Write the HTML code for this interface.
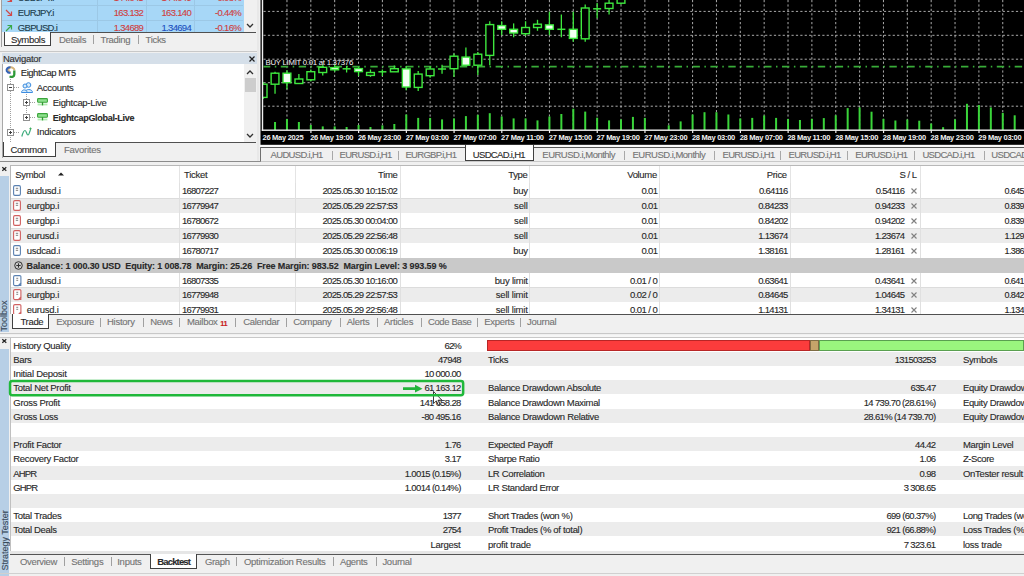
<!DOCTYPE html><html><head><meta charset="utf-8"><style>
html,body{margin:0;padding:0}
body{width:1024px;height:576px;overflow:hidden;position:relative;background:#f0f0f0;font-family:"Liberation Sans",sans-serif;font-size:9px;color:#1e1e1e}
.t{position:absolute;white-space:nowrap;line-height:12px;height:12px;-webkit-text-stroke:0.12px currentColor}
.r{position:absolute}
svg{position:absolute;overflow:visible}
</style></head><body>
<div class="r" style="left:0px;top:0px;width:257px;height:162px;background:#f0f0f0;"></div>
<div class="r" style="left:1.5px;top:0px;width:242px;height:32px;background:#a7d7f7;"></div>
<div class="r" style="left:1px;top:0px;width:1px;height:47px;background:#a0a0a0;"></div>
<div class="r" style="left:2px;top:5px;width:241px;height:1px;background:#9cc8e6;"></div>
<div class="r" style="left:2px;top:20px;width:241px;height:1px;background:#9cc8e6;"></div>
<div class="r" style="left:97px;top:0px;width:1px;height:32px;background:#9cc8e6;"></div>
<div class="r" style="left:145.5px;top:0px;width:1px;height:32px;background:#9cc8e6;"></div>
<div class="r" style="left:193.5px;top:0px;width:1px;height:32px;background:#9cc8e6;"></div>
<div class="r" style="left:243.5px;top:0px;width:13px;height:32px;background:#f0f0f0;"></div>
<svg style="left:246px;top:23px" width="8" height="6"><polyline points="1,1 4,4 7,1" fill="none" stroke="#303030" stroke-width="1.3"/></svg>
<div class="t" style="left:17.8px;top:-8.00px;font-size:9.5px;color:#1c3c4c;font-weight:400;letter-spacing:-0.652px;">USDJPY.i</div>
<div class="t" style="right:880.80px;top:-8.00px;font-size:9.5px;color:#d04040;font-weight:400;letter-spacing:-0.696px;">144.045</div>
<div class="t" style="right:833.00px;top:-8.00px;font-size:9.5px;color:#d04040;font-weight:400;letter-spacing:-0.696px;">144.049</div>
<div class="t" style="right:783.01px;top:-8.00px;font-size:9.5px;color:#d04040;font-weight:400;letter-spacing:-0.693px;">-0.08%</div>
<svg style="left:5px;top:-5px" width="8" height="8"><path d="M1,1 L6.5,6.5 M6.5,2.5 L6.5,6.5 L2.5,6.5" fill="none" stroke="#d04848" stroke-width="1.2"/></svg>
<div class="t" style="left:17.8px;top:7.30px;font-size:9.5px;color:#1c3c4c;font-weight:400;letter-spacing:-0.652px;">EURJPY.i</div>
<div class="t" style="right:880.80px;top:7.30px;font-size:9.5px;color:#d04040;font-weight:400;letter-spacing:-0.696px;">163.132</div>
<div class="t" style="right:833.00px;top:7.30px;font-size:9.5px;color:#d04040;font-weight:400;letter-spacing:-0.696px;">163.140</div>
<div class="t" style="right:783.01px;top:7.30px;font-size:9.5px;color:#d04040;font-weight:400;letter-spacing:-0.693px;">-0.44%</div>
<svg style="left:5px;top:9px" width="8" height="8"><path d="M1,1 L6.5,6.5 M6.5,2.5 L6.5,6.5 L2.5,6.5" fill="none" stroke="#d04848" stroke-width="1.2"/></svg>
<div class="t" style="left:17.8px;top:22.10px;font-size:9.5px;color:#1c3c4c;font-weight:400;letter-spacing:-0.693px;">GBPUSD.i</div>
<div class="t" style="right:880.80px;top:22.10px;font-size:9.5px;color:#d04040;font-weight:400;letter-spacing:-0.696px;">1.34689</div>
<div class="t" style="right:833.00px;top:22.10px;font-size:9.5px;color:#2050c0;font-weight:400;letter-spacing:-0.696px;">1.34694</div>
<div class="t" style="right:783.01px;top:22.10px;font-size:9.5px;color:#d04040;font-weight:400;letter-spacing:-0.693px;">-0.16%</div>
<svg style="left:5px;top:24px" width="8" height="8"><path d="M1,7 L6.5,1.5 M2.5,1.5 L6.5,1.5 L6.5,5.5" fill="none" stroke="#38a848" stroke-width="1.2"/></svg>
<div class="r" style="left:51px;top:31.5px;width:205px;height:1.3px;background:#505050;"></div>
<div class="r" style="left:3.5px;top:32px;width:47px;height:14px;background:#fff;border:1px solid #404040;border-top:none;box-sizing:border-box"></div>
<div class="t" style="left:10.9px;top:33.80px;font-size:9.5px;color:#282828;font-weight:400;letter-spacing:-0.321px;">Symbols</div>
<div class="t" style="left:59px;top:33.80px;font-size:9.5px;color:#747474;font-weight:400;letter-spacing:-0.276px;">Details</div>
<div class="r" style="left:93px;top:35px;width:1px;height:9px;background:#a0a0a0;"></div>
<div class="t" style="left:100.5px;top:33.80px;font-size:9.5px;color:#747474;font-weight:400;letter-spacing:-0.286px;">Trading</div>
<div class="r" style="left:137.5px;top:35px;width:1px;height:9px;background:#a0a0a0;"></div>
<div class="t" style="left:145.5px;top:33.80px;font-size:9.5px;color:#747474;font-weight:400;letter-spacing:-0.304px;">Ticks</div>
<div class="r" style="left:0px;top:51px;width:257px;height:1px;background:#c8c8c8;"></div>
<div class="r" style="left:1.5px;top:53px;width:255px;height:11px;background:#d5dfe9;"></div>
<div class="t" style="left:3px;top:52.80px;font-size:9.5px;color:#303030;font-weight:400;letter-spacing:-0.277px;">Navigator</div>
<svg style="left:249px;top:55.5px" width="6" height="6"><path d="M0.5,0.5 L5.5,5.5 M5.5,0.5 L0.5,5.5" stroke="#202020" stroke-width="1.2"/></svg>
<div class="r" style="left:2px;top:64px;width:242px;height:78px;background:#ffffff;"></div>
<div class="r" style="left:1.5px;top:64px;width:1px;height:94px;background:#a8a8a8;"></div>
<div class="r" style="left:244px;top:64px;width:12.5px;height:78px;background:#f0f0f0;"></div>
<div class="r" style="left:244.5px;top:77.7px;width:11px;height:14.6px;background:#cdcdcd;"></div>
<svg style="left:246px;top:69px" width="8" height="6"><polyline points="1,5 4,2 7,5" fill="none" stroke="#303030" stroke-width="1.3"/></svg>
<svg style="left:246px;top:132.5px" width="8" height="6"><polyline points="1,1 4,4 7,1" fill="none" stroke="#303030" stroke-width="1.3"/></svg>
<svg style="left:0px;top:64px" width="60" height="80"><line x1="10.5" y1="13" x2="10.5" y2="78" stroke="#a0a0a0" stroke-width="1" stroke-dasharray="1 1"/><line x1="26.5" y1="28" x2="26.5" y2="53" stroke="#a0a0a0" stroke-width="1" stroke-dasharray="1 1"/><line x1="14" y1="23.5" x2="20" y2="23.5" stroke="#a0a0a0" stroke-width="1" stroke-dasharray="1 1"/><line x1="30" y1="38.5" x2="36" y2="38.5" stroke="#a0a0a0" stroke-width="1" stroke-dasharray="1 1"/><line x1="30" y1="53.5" x2="36" y2="53.5" stroke="#a0a0a0" stroke-width="1" stroke-dasharray="1 1"/><line x1="14" y1="68.5" x2="20" y2="68.5" stroke="#a0a0a0" stroke-width="1" stroke-dasharray="1 1"/></svg>
<svg style="left:4.5px;top:66px" width="12" height="12"><path d="M9.5,4.5 C9.5,2 6.5,0.8 5,1.5 C2.5,2.5 3,5 5.5,6.5" fill="none" stroke="#d6b47a" stroke-width="2"/><path d="M5.5,1.2 C3,1 1,3 1.8,5 C2.5,6.5 4,7 5.5,7" fill="none" stroke="#3462b4" stroke-width="2.1"/><path d="M9.3,4.5 L9.3,8.5 C9.3,10.5 7,11.5 4.5,10.5" fill="none" stroke="#2e9a38" stroke-width="2.3"/></svg>
<div class="t" style="left:20.8px;top:66.70px;font-size:9.5px;color:#282828;font-weight:400;letter-spacing:-0.48px;">EightCap MT5</div>
<svg style="left:7px;top:84px" width="7" height="7"><rect x="0.5" y="0.5" width="6" height="6" fill="#fff" stroke="#909090" stroke-width="1"/><path d="M2,3.5 H5" stroke="#404040" stroke-width="1"/><path d="M3.5,2 V5" stroke="#404040" stroke-width="1"/></svg>
<svg style="left:7px;top:84px" width="7" height="7"><rect x="0.5" y="0.5" width="6" height="6" fill="#fff" stroke="#909090" stroke-width="1"/><path d="M2,3.5 H5" stroke="#404040" stroke-width="1"/></svg>
<svg style="left:20.5px;top:82px" width="12" height="11"><circle cx="7.5" cy="3" r="2.3" fill="#d8ecfa" stroke="#3c8ce0" stroke-width="1"/><path d="M4,10.5 C4,6.5 11.5,6.5 11.5,10.5 Z" fill="#d8ecfa" stroke="#3c8ce0" stroke-width="1"/><circle cx="4" cy="4" r="2" fill="#d8ecfa" stroke="#3c8ce0" stroke-width="1"/><path d="M0.5,10.5 C0.5,7 6,7 6,10.5 Z" fill="#d8ecfa" stroke="#3c8ce0" stroke-width="1"/></svg>
<div class="t" style="left:36.8px;top:81.70px;font-size:9.5px;color:#282828;font-weight:400;letter-spacing:-0.297px;">Accounts</div>
<svg style="left:23.1px;top:99.2px" width="7" height="7"><rect x="0.5" y="0.5" width="6" height="6" fill="#fff" stroke="#909090" stroke-width="1"/><path d="M2,3.5 H5" stroke="#404040" stroke-width="1"/><path d="M3.5,2 V5" stroke="#404040" stroke-width="1"/></svg>
<svg style="left:36.8px;top:97.8px" width="11" height="8"><rect x="0.6" y="0.6" width="9.8" height="3.6" rx="0.8" fill="#8ee08e" stroke="#3aa53a" stroke-width="1.1"/><rect x="0.6" y="5.6" width="9.8" height="1.8" fill="#b4ecb4"/><path d="M5.5,4.2 V7.4" stroke="#2f9a2f" stroke-width="1.3"/></svg>
<div class="t" style="left:52.8px;top:96.60px;font-size:9.5px;color:#282828;font-weight:400;letter-spacing:-0.304px;">Eightcap-Live</div>
<svg style="left:23.1px;top:114px" width="7" height="7"><rect x="0.5" y="0.5" width="6" height="6" fill="#fff" stroke="#909090" stroke-width="1"/><path d="M2,3.5 H5" stroke="#404040" stroke-width="1"/><path d="M3.5,2 V5" stroke="#404040" stroke-width="1"/></svg>
<svg style="left:36.8px;top:112.6px" width="11" height="8"><rect x="0.6" y="0.6" width="9.8" height="3.6" rx="0.8" fill="#8ee08e" stroke="#3aa53a" stroke-width="1.1"/><rect x="0.6" y="5.6" width="9.8" height="1.8" fill="#b4ecb4"/><path d="M5.5,4.2 V7.4" stroke="#2f9a2f" stroke-width="1.3"/></svg>
<div class="t" style="left:52.8px;top:111.60px;font-size:9px;color:#282828;font-weight:700;letter-spacing:-0.3px;">EightcapGlobal-Live</div>
<svg style="left:7px;top:129.4px" width="7" height="7"><rect x="0.5" y="0.5" width="6" height="6" fill="#fff" stroke="#909090" stroke-width="1"/><path d="M2,3.5 H5" stroke="#404040" stroke-width="1"/><path d="M3.5,2 V5" stroke="#404040" stroke-width="1"/></svg>
<svg style="left:21px;top:127px" width="11" height="10"><path d="M0.8,9.5 C1.5,7 2.5,3.5 4,3.5 C5.5,3.5 5.5,8 7,8 C8.3,8 8.5,4 9.5,3" fill="none" stroke="#3aaa7a" stroke-width="1.2"/><path d="M9.5,0.5 V3 M8.3,1.7 H10.7" stroke="#3aaa5a" stroke-width="0.9"/></svg>
<div class="t" style="left:36.8px;top:126.40px;font-size:9.5px;color:#282828;font-weight:400;letter-spacing:-0.218px;">Indicators</div>
<div class="r" style="left:56px;top:141.5px;width:200px;height:1.3px;background:#505050;"></div>
<div class="r" style="left:244px;top:141.5px;width:12px;height:1.3px;background:#505050;"></div>
<div class="r" style="left:3.3px;top:142px;width:52.5px;height:14.5px;background:#fff;border:1px solid #404040;border-top:none;box-sizing:border-box"></div>
<div class="t" style="left:10.5px;top:143.60px;font-size:9.5px;color:#282828;font-weight:400;letter-spacing:-0.398px;">Common</div>
<div class="t" style="left:64px;top:143.60px;font-size:9.5px;color:#747474;font-weight:400;letter-spacing:-0.259px;">Favorites</div>
<div class="r" style="left:257px;top:0px;width:2px;height:162px;background:#e8e8e8;"></div>
<svg style="left:259.5px;top:0px" width="765" height="145" viewBox="259.5 0 765 145">
<rect x="260" y="0" width="764.5" height="144.8" fill="#000"/><defs><clipPath id="cp"><rect x="262.6" y="0" width="762" height="130"/></clipPath></defs><g clip-path="url(#cp)">
<g stroke="#ababab" stroke-width="1" stroke-dasharray="2.2 2.2"><line x1="286.46" y1="0" x2="286.46" y2="130" /><line x1="310.32" y1="0" x2="310.32" y2="130" /><line x1="334.18" y1="0" x2="334.18" y2="130" /><line x1="358.04" y1="0" x2="358.04" y2="130" /><line x1="381.90" y1="0" x2="381.90" y2="130" /><line x1="405.76" y1="0" x2="405.76" y2="130" /><line x1="429.62" y1="0" x2="429.62" y2="130" /><line x1="453.48" y1="0" x2="453.48" y2="130" /><line x1="477.34" y1="0" x2="477.34" y2="130" /><line x1="501.20" y1="0" x2="501.20" y2="130" /><line x1="525.06" y1="0" x2="525.06" y2="130" /><line x1="548.92" y1="0" x2="548.92" y2="130" /><line x1="572.78" y1="0" x2="572.78" y2="130" /><line x1="596.64" y1="0" x2="596.64" y2="130" /><line x1="620.50" y1="0" x2="620.50" y2="130" /><line x1="644.36" y1="0" x2="644.36" y2="130" /><line x1="668.22" y1="0" x2="668.22" y2="130" /><line x1="692.08" y1="0" x2="692.08" y2="130" /><line x1="715.94" y1="0" x2="715.94" y2="130" /><line x1="739.80" y1="0" x2="739.80" y2="130" /><line x1="763.66" y1="0" x2="763.66" y2="130" /><line x1="787.52" y1="0" x2="787.52" y2="130" /><line x1="811.38" y1="0" x2="811.38" y2="130" /><line x1="835.24" y1="0" x2="835.24" y2="130" /><line x1="859.10" y1="0" x2="859.10" y2="130" /><line x1="882.96" y1="0" x2="882.96" y2="130" /><line x1="906.82" y1="0" x2="906.82" y2="130" /><line x1="930.68" y1="0" x2="930.68" y2="130" /><line x1="954.54" y1="0" x2="954.54" y2="130" /><line x1="978.40" y1="0" x2="978.40" y2="130" /><line x1="1002.26" y1="0" x2="1002.26" y2="130" /><line x1="1026.12" y1="0" x2="1026.12" y2="130" /><line x1="263" y1="11.4" x2="1024" y2="11.4" /><line x1="263" y1="35.3" x2="1024" y2="35.3" /><line x1="263" y1="59.2" x2="1024" y2="59.2" /><line x1="263" y1="82.7" x2="1024" y2="82.7" /><line x1="263" y1="106.2" x2="1024" y2="106.2" /></g>
<line x1="263" y1="66.7" x2="1024" y2="66.7" stroke="#38ac38" stroke-width="1.7" stroke-dasharray="7.4 4.5 1.5 4.5" stroke-dashoffset="0.6"/>
<line x1="262.60" y1="82" x2="262.60" y2="99" stroke="#3ee83e" stroke-width="1.3"/><rect x="258.70" y="84.2" width="7.8" height="13.20" fill="#000" stroke="#3ee83e" stroke-width="1.4"/><line x1="274.53" y1="71.7" x2="274.53" y2="93.7" stroke="#3ee83e" stroke-width="1.3"/><rect x="270.63" y="73.2" width="7.8" height="11.00" fill="#000" stroke="#3ee83e" stroke-width="1.4"/><line x1="286.46" y1="70.3" x2="286.46" y2="89.3" stroke="#3ee83e" stroke-width="1.3"/><rect x="282.56" y="73.2" width="7.8" height="9.50" fill="#f4fff4" stroke="#3ee83e" stroke-width="1.4"/><line x1="298.39" y1="74" x2="298.39" y2="83.5" stroke="#3ee83e" stroke-width="1.3"/><rect x="294.49" y="79" width="7.8" height="4.50" fill="#000" stroke="#3ee83e" stroke-width="1.4"/><line x1="310.32" y1="69.5" x2="310.32" y2="81.3" stroke="#3ee83e" stroke-width="1.3"/><rect x="306.42" y="71.7" width="7.8" height="8.10" fill="#000" stroke="#3ee83e" stroke-width="1.4"/><line x1="322.25" y1="65.2" x2="322.25" y2="75.4" stroke="#3ee83e" stroke-width="1.3"/><rect x="318.35" y="67.3" width="7.8" height="5.20" fill="#000" stroke="#3ee83e" stroke-width="1.4"/><line x1="334.18" y1="64.4" x2="334.18" y2="71.7" stroke="#3ee83e" stroke-width="1.3"/><rect x="330.28" y="67.6" width="7.8" height="2.20" fill="#f4fff4" stroke="#3ee83e" stroke-width="1.4"/><line x1="346.11" y1="65.9" x2="346.11" y2="72.5" stroke="#3ee83e" stroke-width="1.3"/><line x1="342.11" y1="68.8" x2="350.11" y2="68.8" stroke="#3ee83e" stroke-width="1.5"/><line x1="358.04" y1="66.6" x2="358.04" y2="76.1" stroke="#3ee83e" stroke-width="1.3"/><rect x="354.14" y="68.6" width="7.8" height="3.00" fill="#f4fff4" stroke="#3ee83e" stroke-width="1.4"/><line x1="369.97" y1="69.5" x2="369.97" y2="76.9" stroke="#3ee83e" stroke-width="1.3"/><rect x="366.07" y="72.5" width="7.8" height="2.90" fill="#000" stroke="#3ee83e" stroke-width="1.4"/><line x1="381.90" y1="69.5" x2="381.90" y2="76" stroke="#3ee83e" stroke-width="1.3"/><line x1="377.90" y1="71.8" x2="385.90" y2="71.8" stroke="#3ee83e" stroke-width="1.5"/><line x1="393.83" y1="65.5" x2="393.83" y2="71.8" stroke="#3ee83e" stroke-width="1.3"/><rect x="389.93" y="68.7" width="7.8" height="3.10" fill="#000" stroke="#3ee83e" stroke-width="1.4"/><line x1="405.76" y1="66" x2="405.76" y2="90.2" stroke="#3ee83e" stroke-width="1.3"/><rect x="401.86" y="68.9" width="7.8" height="18.10" fill="#f4fff4" stroke="#3ee83e" stroke-width="1.4"/><line x1="417.69" y1="71" x2="417.69" y2="91" stroke="#3ee83e" stroke-width="1.3"/><rect x="413.79" y="74.1" width="7.8" height="13.30" fill="#000" stroke="#3ee83e" stroke-width="1.4"/><line x1="429.62" y1="66" x2="429.62" y2="77.7" stroke="#3ee83e" stroke-width="1.3"/><rect x="425.72" y="69" width="7.8" height="6.70" fill="#000" stroke="#3ee83e" stroke-width="1.4"/><line x1="441.55" y1="64.8" x2="441.55" y2="73.8" stroke="#3ee83e" stroke-width="1.3"/><line x1="437.55" y1="69" x2="445.55" y2="69" stroke="#3ee83e" stroke-width="1.5"/><line x1="453.48" y1="53.5" x2="453.48" y2="76.9" stroke="#3ee83e" stroke-width="1.3"/><rect x="449.58" y="56.2" width="7.8" height="12.50" fill="#000" stroke="#3ee83e" stroke-width="1.4"/><line x1="465.41" y1="47.6" x2="465.41" y2="65.2" stroke="#3ee83e" stroke-width="1.3"/><rect x="461.51" y="57.1" width="7.8" height="8.10" fill="#f4fff4" stroke="#3ee83e" stroke-width="1.4"/><line x1="477.34" y1="52" x2="477.34" y2="75" stroke="#3ee83e" stroke-width="1.3"/><rect x="473.44" y="54.2" width="7.8" height="11.00" fill="#000" stroke="#3ee83e" stroke-width="1.4"/><line x1="489.27" y1="21.2" x2="489.27" y2="65.2" stroke="#3ee83e" stroke-width="1.3"/><rect x="485.37" y="24.6" width="7.8" height="30.80" fill="#000" stroke="#3ee83e" stroke-width="1.4"/><line x1="501.20" y1="21.2" x2="501.20" y2="35.2" stroke="#3ee83e" stroke-width="1.3"/><rect x="497.30" y="25.6" width="7.8" height="3.70" fill="#f4fff4" stroke="#3ee83e" stroke-width="1.4"/><line x1="513.13" y1="23.4" x2="513.13" y2="37.3" stroke="#3ee83e" stroke-width="1.3"/><rect x="509.23" y="29.3" width="7.8" height="3.70" fill="#f4fff4" stroke="#3ee83e" stroke-width="1.4"/><line x1="525.06" y1="21.2" x2="525.06" y2="35.9" stroke="#3ee83e" stroke-width="1.3"/><rect x="521.16" y="27.5" width="7.8" height="6.20" fill="#000" stroke="#3ee83e" stroke-width="1.4"/><line x1="536.99" y1="19.8" x2="536.99" y2="30.8" stroke="#3ee83e" stroke-width="1.3"/><rect x="533.09" y="24.2" width="7.8" height="3.30" fill="#000" stroke="#3ee83e" stroke-width="1.4"/><line x1="548.92" y1="11.7" x2="548.92" y2="35.2" stroke="#3ee83e" stroke-width="1.3"/><rect x="545.02" y="24.9" width="7.8" height="4.40" fill="#f4fff4" stroke="#3ee83e" stroke-width="1.4"/><line x1="560.85" y1="14.6" x2="560.85" y2="37.3" stroke="#3ee83e" stroke-width="1.3"/><line x1="556.85" y1="29.3" x2="564.85" y2="29.3" stroke="#3ee83e" stroke-width="1.5"/><line x1="572.78" y1="11.7" x2="572.78" y2="41.7" stroke="#3ee83e" stroke-width="1.3"/><rect x="568.88" y="29.3" width="7.8" height="9.10" fill="#f4fff4" stroke="#3ee83e" stroke-width="1.4"/><line x1="584.71" y1="4.4" x2="584.71" y2="41.7" stroke="#3ee83e" stroke-width="1.3"/><rect x="580.81" y="8" width="7.8" height="30.80" fill="#000" stroke="#3ee83e" stroke-width="1.4"/><line x1="596.64" y1="2.9" x2="596.64" y2="18.3" stroke="#3ee83e" stroke-width="1.3"/><line x1="592.64" y1="8.8" x2="600.64" y2="8.8" stroke="#3ee83e" stroke-width="1.5"/><line x1="608.57" y1="0" x2="608.57" y2="14.6" stroke="#3ee83e" stroke-width="1.3"/><rect x="604.67" y="3.2" width="7.8" height="5.30" fill="#000" stroke="#3ee83e" stroke-width="1.4"/><line x1="620.50" y1="-5" x2="620.50" y2="4.4" stroke="#3ee83e" stroke-width="1.3"/><rect x="616.60" y="-3" width="7.8" height="6.20" fill="#000" stroke="#3ee83e" stroke-width="1.4"/>
<rect x="273.53" y="122" width="2" height="8.00" fill="#3ad43a"/><rect x="285.46" y="119" width="2" height="11.00" fill="#3ad43a"/><rect x="297.39" y="122" width="2" height="8.00" fill="#3ad43a"/><rect x="309.32" y="125" width="2" height="5.00" fill="#3ad43a"/><rect x="321.25" y="126.4" width="2" height="3.60" fill="#3ad43a"/><rect x="333.18" y="126.4" width="2" height="3.60" fill="#3ad43a"/><rect x="345.11" y="127" width="2" height="3.00" fill="#3ad43a"/><rect x="357.04" y="125" width="2" height="5.00" fill="#3ad43a"/><rect x="368.97" y="127" width="2" height="3.00" fill="#3ad43a"/><rect x="380.90" y="125.4" width="2" height="4.60" fill="#3ad43a"/><rect x="392.83" y="124" width="2" height="6.00" fill="#3ad43a"/><rect x="404.76" y="114.5" width="2" height="15.50" fill="#3ad43a"/><rect x="416.69" y="117.9" width="2" height="12.10" fill="#3ad43a"/><rect x="428.62" y="117.9" width="2" height="12.10" fill="#3ad43a"/><rect x="440.55" y="119.4" width="2" height="10.60" fill="#3ad43a"/><rect x="452.48" y="118.4" width="2" height="11.60" fill="#3ad43a"/><rect x="464.41" y="116.1" width="2" height="13.90" fill="#3ad43a"/><rect x="476.34" y="114.9" width="2" height="15.10" fill="#3ad43a"/><rect x="488.27" y="113.2" width="2" height="16.80" fill="#3ad43a"/><rect x="500.20" y="116.5" width="2" height="13.50" fill="#3ad43a"/><rect x="512.13" y="118.4" width="2" height="11.60" fill="#3ad43a"/><rect x="524.06" y="118.4" width="2" height="11.60" fill="#3ad43a"/><rect x="535.99" y="120.4" width="2" height="9.60" fill="#3ad43a"/><rect x="547.92" y="116.5" width="2" height="13.50" fill="#3ad43a"/><rect x="559.85" y="114" width="2" height="16.00" fill="#3ad43a"/><rect x="571.78" y="108.7" width="2" height="21.30" fill="#3ad43a"/><rect x="583.71" y="111.6" width="2" height="18.40" fill="#3ad43a"/><rect x="595.64" y="117.7" width="2" height="12.30" fill="#3ad43a"/><rect x="607.57" y="120.4" width="2" height="9.60" fill="#3ad43a"/><rect x="619.50" y="119.4" width="2" height="10.60" fill="#3ad43a"/><rect x="631.43" y="116.9" width="2" height="13.10" fill="#3ad43a"/><rect x="643.36" y="117.9" width="2" height="12.10" fill="#3ad43a"/><rect x="667.22" y="125.3" width="2" height="4.70" fill="#3ad43a"/><rect x="679.15" y="121.4" width="2" height="8.60" fill="#3ad43a"/><rect x="691.08" y="114.5" width="2" height="15.50" fill="#3ad43a"/><rect x="703.01" y="112.2" width="2" height="17.80" fill="#3ad43a"/><rect x="714.94" y="112.2" width="2" height="17.80" fill="#3ad43a"/><rect x="726.87" y="114.5" width="2" height="15.50" fill="#3ad43a"/><rect x="738.80" y="118.4" width="2" height="11.60" fill="#3ad43a"/><rect x="750.73" y="117.9" width="2" height="12.10" fill="#3ad43a"/><rect x="762.66" y="115.5" width="2" height="14.50" fill="#3ad43a"/><rect x="774.59" y="117.9" width="2" height="12.10" fill="#3ad43a"/><rect x="786.52" y="119" width="2" height="11.00" fill="#3ad43a"/><rect x="798.45" y="120" width="2" height="10.00" fill="#3ad43a"/><rect x="810.38" y="118.8" width="2" height="11.20" fill="#3ad43a"/><rect x="822.31" y="118.1" width="2" height="11.90" fill="#3ad43a"/><rect x="834.24" y="115.3" width="2" height="14.70" fill="#3ad43a"/><rect x="846.17" y="108.1" width="2" height="21.90" fill="#3ad43a"/><rect x="858.10" y="107.4" width="2" height="22.60" fill="#3ad43a"/><rect x="870.03" y="111.7" width="2" height="18.30" fill="#3ad43a"/><rect x="881.96" y="118.8" width="2" height="11.20" fill="#3ad43a"/><rect x="893.89" y="120.5" width="2" height="9.50" fill="#3ad43a"/><rect x="905.82" y="119.5" width="2" height="10.50" fill="#3ad43a"/><rect x="917.75" y="120.7" width="2" height="9.30" fill="#3ad43a"/><rect x="929.68" y="123.6" width="2" height="6.40" fill="#3ad43a"/><rect x="941.61" y="127.2" width="2" height="2.80" fill="#3ad43a"/><rect x="953.54" y="119.3" width="2" height="10.70" fill="#3ad43a"/><rect x="965.47" y="103.8" width="2" height="26.20" fill="#3ad43a"/><rect x="977.40" y="105" width="2" height="25.00" fill="#3ad43a"/><rect x="989.33" y="107.4" width="2" height="22.60" fill="#3ad43a"/><rect x="1001.26" y="112.9" width="2" height="17.10" fill="#3ad43a"/><rect x="1013.19" y="115.3" width="2" height="14.70" fill="#3ad43a"/>
</g>
<rect x="261.3" y="0" width="1.4" height="131" fill="#f0f0f0"/>
<rect x="261.3" y="129.5" width="763" height="1.4" fill="#f0f0f0"/>
<text x="262.00" y="139.6" font-family="Liberation Sans" font-size="7.5" font-weight="700" fill="#f2f2f2" letter-spacing="-0.27">26 May 2025</text><rect x="309.82" y="130" width="1.2" height="3" fill="#f0f0f0"/><text x="309.72" y="139.6" font-family="Liberation Sans" font-size="7.5" font-weight="700" fill="#f2f2f2" letter-spacing="-0.27">26 May 19:00</text><rect x="357.54" y="130" width="1.2" height="3" fill="#f0f0f0"/><text x="357.44" y="139.6" font-family="Liberation Sans" font-size="7.5" font-weight="700" fill="#f2f2f2" letter-spacing="-0.27">26 May 23:00</text><rect x="405.26" y="130" width="1.2" height="3" fill="#f0f0f0"/><text x="405.16" y="139.6" font-family="Liberation Sans" font-size="7.5" font-weight="700" fill="#f2f2f2" letter-spacing="-0.27">27 May 03:00</text><rect x="452.98" y="130" width="1.2" height="3" fill="#f0f0f0"/><text x="452.88" y="139.6" font-family="Liberation Sans" font-size="7.5" font-weight="700" fill="#f2f2f2" letter-spacing="-0.27">27 May 07:00</text><rect x="500.70" y="130" width="1.2" height="3" fill="#f0f0f0"/><text x="500.60" y="139.6" font-family="Liberation Sans" font-size="7.5" font-weight="700" fill="#f2f2f2" letter-spacing="-0.27">27 May 11:00</text><rect x="548.42" y="130" width="1.2" height="3" fill="#f0f0f0"/><text x="548.32" y="139.6" font-family="Liberation Sans" font-size="7.5" font-weight="700" fill="#f2f2f2" letter-spacing="-0.27">27 May 15:00</text><rect x="596.14" y="130" width="1.2" height="3" fill="#f0f0f0"/><text x="596.04" y="139.6" font-family="Liberation Sans" font-size="7.5" font-weight="700" fill="#f2f2f2" letter-spacing="-0.27">27 May 19:00</text><rect x="643.86" y="130" width="1.2" height="3" fill="#f0f0f0"/><text x="643.76" y="139.6" font-family="Liberation Sans" font-size="7.5" font-weight="700" fill="#f2f2f2" letter-spacing="-0.27">27 May 23:00</text><rect x="691.58" y="130" width="1.2" height="3" fill="#f0f0f0"/><text x="691.48" y="139.6" font-family="Liberation Sans" font-size="7.5" font-weight="700" fill="#f2f2f2" letter-spacing="-0.27">28 May 03:00</text><rect x="739.30" y="130" width="1.2" height="3" fill="#f0f0f0"/><text x="739.20" y="139.6" font-family="Liberation Sans" font-size="7.5" font-weight="700" fill="#f2f2f2" letter-spacing="-0.27">28 May 07:00</text><rect x="787.02" y="130" width="1.2" height="3" fill="#f0f0f0"/><text x="786.92" y="139.6" font-family="Liberation Sans" font-size="7.5" font-weight="700" fill="#f2f2f2" letter-spacing="-0.27">28 May 11:00</text><rect x="834.74" y="130" width="1.2" height="3" fill="#f0f0f0"/><text x="834.64" y="139.6" font-family="Liberation Sans" font-size="7.5" font-weight="700" fill="#f2f2f2" letter-spacing="-0.27">28 May 15:00</text><rect x="882.46" y="130" width="1.2" height="3" fill="#f0f0f0"/><text x="882.36" y="139.6" font-family="Liberation Sans" font-size="7.5" font-weight="700" fill="#f2f2f2" letter-spacing="-0.27">28 May 19:00</text><rect x="930.18" y="130" width="1.2" height="3" fill="#f0f0f0"/><text x="930.08" y="139.6" font-family="Liberation Sans" font-size="7.5" font-weight="700" fill="#f2f2f2" letter-spacing="-0.27">28 May 23:00</text><rect x="977.90" y="130" width="1.2" height="3" fill="#f0f0f0"/><text x="977.80" y="139.6" font-family="Liberation Sans" font-size="7.5" font-weight="700" fill="#f2f2f2" letter-spacing="-0.27">29 May 03:00</text>
<text x="265" y="65" font-family="Liberation Sans" font-size="7.8" fill="#f6f6f6" letter-spacing="-0.27">BUY LIMIT 0.01 at 1.37376</text>
</svg>
<div class="r" style="left:259.5px;top:144.8px;width:764.5px;height:16.5px;background:#f0f0f0;"></div>
<div class="r" style="left:259.5px;top:144.8px;width:764.5px;height:2.4px;background:#f8f8f8;"></div>
<div class="r" style="left:260px;top:147.2px;width:764px;height:1.2px;background:#555555;"></div>
<div class="r" style="left:259.6px;top:147.2px;width:1.1px;height:14px;background:#707070;"></div>
<div class="r" style="left:464.6px;top:145px;width:69px;height:16px;background:#fff;border:1px solid #404040;border-top:none;box-sizing:border-box"></div>
<div class="t" style="left:270.6px;top:149.30px;font-size:9.5px;color:#747474;font-weight:400;letter-spacing:-0.684px;">AUDUSD.i,H1</div>
<div class="r" style="left:331.6px;top:150.5px;width:1px;height:9px;background:#a8a8a8;"></div>
<div class="t" style="left:339.5px;top:149.30px;font-size:9.5px;color:#747474;font-weight:400;letter-spacing:-0.684px;">EURUSD.i,H1</div>
<div class="r" style="left:397.5px;top:150.5px;width:1px;height:9px;background:#a8a8a8;"></div>
<div class="t" style="left:405.4px;top:149.30px;font-size:9.5px;color:#747474;font-weight:400;letter-spacing:-0.684px;">EURGBP.i,H1</div>
<div class="t" style="left:472.8px;top:149.30px;font-size:9.5px;color:#282828;font-weight:400;letter-spacing:-0.684px;">USDCAD.i,H1</div>
<div class="t" style="left:542.3px;top:149.30px;font-size:9.5px;color:#747474;font-weight:400;letter-spacing:-0.507px;">EURUSD.i,Monthly</div>
<div class="r" style="left:623.8px;top:150.5px;width:1px;height:9px;background:#a8a8a8;"></div>
<div class="t" style="left:632.5px;top:149.30px;font-size:9.5px;color:#747474;font-weight:400;letter-spacing:-0.507px;">EURUSD.i,Monthly</div>
<div class="r" style="left:714px;top:150.5px;width:1px;height:9px;background:#a8a8a8;"></div>
<div class="t" style="left:722.5px;top:149.30px;font-size:9.5px;color:#747474;font-weight:400;letter-spacing:-0.684px;">EURUSD.i,H1</div>
<div class="r" style="left:780.3px;top:150.5px;width:1px;height:9px;background:#a8a8a8;"></div>
<div class="t" style="left:788.5px;top:149.30px;font-size:9.5px;color:#747474;font-weight:400;letter-spacing:-0.684px;">EURUSD.i,H1</div>
<div class="r" style="left:847.2px;top:150.5px;width:1px;height:9px;background:#a8a8a8;"></div>
<div class="t" style="left:855.3px;top:149.30px;font-size:9.5px;color:#747474;font-weight:400;letter-spacing:-0.684px;">EURUSD.i,H1</div>
<div class="r" style="left:913.6px;top:150.5px;width:1px;height:9px;background:#a8a8a8;"></div>
<div class="t" style="left:922.4px;top:149.30px;font-size:9.5px;color:#747474;font-weight:400;letter-spacing:-0.684px;">USDCAD.i,H1</div>
<div class="r" style="left:983.5px;top:150.5px;width:1px;height:9px;background:#a8a8a8;"></div>
<div class="t" style="left:991.3px;top:149.30px;font-size:9.5px;color:#747474;font-weight:400;letter-spacing:-0.684px;">USDCAD.i,H1</div>
<div class="r" style="left:259.5px;top:161px;width:764.5px;height:1px;background:#d0d0d0;"></div>
<div class="r" style="left:0px;top:161px;width:1024px;height:1px;background:#c8c8c8;"></div>
<div class="r" style="left:0px;top:160.8px;width:260.5px;height:1.1px;background:#8c8c8c;"></div>
<svg style="left:1.7px;top:167.2px" width="5" height="4"><path d="M0.3,0.3 L4.3,3.7 M4.3,0.3 L0.3,3.7" stroke="#202020" stroke-width="1.2"/></svg>
<div class="r" style="left:0px;top:176px;width:9px;height:156px;background:#b7cfe6;"></div>
<div class="t" style="left:-12px;top:310px;width:31px;transform:rotate(-90deg);font-size:9px;color:#3a4a5a;text-align:center">Toolbox</div>
<div class="r" style="left:10px;top:165.2px;width:1014px;height:149.5px;background:#ffffff;"></div>
<div class="r" style="left:10px;top:165.2px;width:1014px;height:1px;background:#b8b8b8;"></div>
<div class="r" style="left:10px;top:165.2px;width:1px;height:149.5px;background:#b8b8b8;"></div>
<div class="t" style="left:15.3px;top:168.90px;font-size:9.5px;color:#282828;font-weight:400;letter-spacing:-0.336px;">Symbol</div>
<svg style="left:58px;top:172px" width="6" height="4"><path d="M0,3.5 L3,0.5 L6,3.5 Z" fill="#202020"/></svg>
<div class="t" style="left:184px;top:168.90px;font-size:9.5px;color:#282828;font-weight:400;letter-spacing:-0.279px;">Ticket</div>
<div class="t" style="right:626.63px;top:168.90px;font-size:9.5px;color:#282828;font-weight:400;letter-spacing:-0.368px;">Time</div>
<div class="t" style="right:496.63px;top:168.90px;font-size:9.5px;color:#282828;font-weight:400;letter-spacing:-0.368px;">Type</div>
<div class="t" style="right:367.16px;top:168.90px;font-size:9.5px;color:#282828;font-weight:400;letter-spacing:-0.341px;">Volume</div>
<div class="t" style="right:237.19px;top:168.90px;font-size:9.5px;color:#282828;font-weight:400;letter-spacing:-0.308px;">Price</div>
<div class="t" style="right:107.49px;top:168.90px;font-size:9.5px;color:#282828;font-weight:400;letter-spacing:-0.506px;">S / L</div>
<div class="r" style="left:178.5px;top:165.5px;width:1px;height:18px;background:#e4e4e4;"></div>
<div class="r" style="left:295px;top:165.5px;width:1px;height:18px;background:#e4e4e4;"></div>
<div class="r" style="left:399.7px;top:165.5px;width:1px;height:18px;background:#e4e4e4;"></div>
<div class="r" style="left:529.2px;top:165.5px;width:1px;height:18px;background:#e4e4e4;"></div>
<div class="r" style="left:659.4px;top:165.5px;width:1px;height:18px;background:#e4e4e4;"></div>
<div class="r" style="left:789.7px;top:165.5px;width:1px;height:18px;background:#e4e4e4;"></div>
<div class="r" style="left:919.5px;top:165.5px;width:1px;height:18px;background:#e4e4e4;"></div>
<svg style="left:13.3px;top:185.3px" width="8" height="11"><rect x="0.6" y="0.6" width="6.8" height="9.8" rx="1.3" fill="#fff" stroke="#5a80b0" stroke-width="1.1"/><path d="M2.8,3.3 H5.2 M2.8,5.3 H5.2" stroke="#707070" stroke-width="0.9"/></svg>
<div class="t" style="left:26.7px;top:185.20px;font-size:9.5px;color:#282828;font-weight:400;letter-spacing:-0.243px;">audusd.i</div>
<div class="t" style="left:181.9px;top:185.20px;font-size:9.5px;color:#282828;font-weight:400;letter-spacing:-0.754px;">16807227</div>
<div class="t" style="right:626.75px;top:185.20px;font-size:9.5px;color:#282828;font-weight:400;letter-spacing:-0.648px;">2025.05.30 10:15:02</div>
<div class="t" style="right:496.25px;top:185.20px;font-size:9.5px;color:#282828;font-weight:400;letter-spacing:-0.245px;">buy</div>
<div class="t" style="right:366.65px;top:185.20px;font-size:9.5px;color:#282828;font-weight:400;letter-spacing:-0.653px;">0.01</div>
<div class="t" style="right:236.30px;top:185.20px;font-size:9.5px;color:#282828;font-weight:400;letter-spacing:-0.696px;">0.64116</div>
<div class="t" style="right:119.60px;top:185.20px;font-size:9.5px;color:#282828;font-weight:400;letter-spacing:-0.696px;">0.54116</div>
<svg style="left:910.5px;top:188.20px" width="6" height="6"><path d="M0.5,0.5 L5.5,5.5 M5.5,0.5 L0.5,5.5" stroke="#808080" stroke-width="1.1"/></svg>
<div class="t" style="right:-20.67px;top:185.20px;font-size:9.5px;color:#282828;font-weight:400;letter-spacing:-0.673px;">0.645</div>
<div class="t" style="left:1004.5px;top:185.20px;letter-spacing:-0.6px">0.645</div>
<div class="r" style="left:178.5px;top:183.3px;width:1px;height:15px;background:#e0e0e0;"></div>
<div class="r" style="left:295px;top:183.3px;width:1px;height:15px;background:#e0e0e0;"></div>
<div class="r" style="left:399.7px;top:183.3px;width:1px;height:15px;background:#e0e0e0;"></div>
<div class="r" style="left:529.2px;top:183.3px;width:1px;height:15px;background:#e0e0e0;"></div>
<div class="r" style="left:659.4px;top:183.3px;width:1px;height:15px;background:#e0e0e0;"></div>
<div class="r" style="left:789.7px;top:183.3px;width:1px;height:15px;background:#e0e0e0;"></div>
<div class="r" style="left:919.5px;top:183.3px;width:1px;height:15px;background:#e0e0e0;"></div>
<div class="r" style="left:10.5px;top:198.3px;width:1013.5px;height:15px;background:#ececec;"></div>
<div class="r" style="left:10.5px;top:198.3px;width:1013.5px;height:1px;background:#dcdcdc;"></div>
<svg style="left:13.3px;top:200.3px" width="8" height="11"><rect x="0.6" y="0.6" width="6.8" height="9.8" rx="1.3" fill="#fff" stroke="#d06060" stroke-width="1.1"/><path d="M2.8,3.3 H5.2 M2.8,5.3 H5.2" stroke="#707070" stroke-width="0.9"/></svg>
<div class="t" style="left:26.7px;top:200.20px;font-size:9.5px;color:#282828;font-weight:400;letter-spacing:-0.234px;">eurgbp.i</div>
<div class="t" style="left:181.9px;top:200.20px;font-size:9.5px;color:#282828;font-weight:400;letter-spacing:-0.754px;">16779947</div>
<div class="t" style="right:626.75px;top:200.20px;font-size:9.5px;color:#282828;font-weight:400;letter-spacing:-0.648px;">2025.05.29 22:57:53</div>
<div class="t" style="right:496.33px;top:200.20px;font-size:9.5px;color:#282828;font-weight:400;letter-spacing:-0.171px;">sell</div>
<div class="t" style="right:366.65px;top:200.20px;font-size:9.5px;color:#282828;font-weight:400;letter-spacing:-0.653px;">0.01</div>
<div class="t" style="right:236.30px;top:200.20px;font-size:9.5px;color:#282828;font-weight:400;letter-spacing:-0.696px;">0.84233</div>
<div class="t" style="right:119.60px;top:200.20px;font-size:9.5px;color:#282828;font-weight:400;letter-spacing:-0.696px;">0.94233</div>
<svg style="left:910.5px;top:203.20px" width="6" height="6"><path d="M0.5,0.5 L5.5,5.5 M5.5,0.5 L0.5,5.5" stroke="#808080" stroke-width="1.1"/></svg>
<div class="t" style="right:-20.67px;top:200.20px;font-size:9.5px;color:#282828;font-weight:400;letter-spacing:-0.673px;">0.839</div>
<div class="t" style="left:1004.5px;top:200.20px;letter-spacing:-0.6px">0.839</div>
<div class="r" style="left:178.5px;top:198.3px;width:1px;height:15px;background:#e0e0e0;"></div>
<div class="r" style="left:295px;top:198.3px;width:1px;height:15px;background:#e0e0e0;"></div>
<div class="r" style="left:399.7px;top:198.3px;width:1px;height:15px;background:#e0e0e0;"></div>
<div class="r" style="left:529.2px;top:198.3px;width:1px;height:15px;background:#e0e0e0;"></div>
<div class="r" style="left:659.4px;top:198.3px;width:1px;height:15px;background:#e0e0e0;"></div>
<div class="r" style="left:789.7px;top:198.3px;width:1px;height:15px;background:#e0e0e0;"></div>
<div class="r" style="left:919.5px;top:198.3px;width:1px;height:15px;background:#e0e0e0;"></div>
<svg style="left:13.3px;top:215.3px" width="8" height="11"><rect x="0.6" y="0.6" width="6.8" height="9.8" rx="1.3" fill="#fff" stroke="#d06060" stroke-width="1.1"/><path d="M2.8,3.3 H5.2 M2.8,5.3 H5.2" stroke="#707070" stroke-width="0.9"/></svg>
<div class="t" style="left:26.7px;top:215.20px;font-size:9.5px;color:#282828;font-weight:400;letter-spacing:-0.234px;">eurgbp.i</div>
<div class="t" style="left:181.9px;top:215.20px;font-size:9.5px;color:#282828;font-weight:400;letter-spacing:-0.754px;">16780672</div>
<div class="t" style="right:626.75px;top:215.20px;font-size:9.5px;color:#282828;font-weight:400;letter-spacing:-0.648px;">2025.05.30 00:04:00</div>
<div class="t" style="right:496.33px;top:215.20px;font-size:9.5px;color:#282828;font-weight:400;letter-spacing:-0.171px;">sell</div>
<div class="t" style="right:366.65px;top:215.20px;font-size:9.5px;color:#282828;font-weight:400;letter-spacing:-0.653px;">0.01</div>
<div class="t" style="right:236.30px;top:215.20px;font-size:9.5px;color:#282828;font-weight:400;letter-spacing:-0.696px;">0.84202</div>
<div class="t" style="right:119.60px;top:215.20px;font-size:9.5px;color:#282828;font-weight:400;letter-spacing:-0.696px;">0.94202</div>
<svg style="left:910.5px;top:218.20px" width="6" height="6"><path d="M0.5,0.5 L5.5,5.5 M5.5,0.5 L0.5,5.5" stroke="#808080" stroke-width="1.1"/></svg>
<div class="t" style="right:-20.67px;top:215.20px;font-size:9.5px;color:#282828;font-weight:400;letter-spacing:-0.673px;">0.839</div>
<div class="t" style="left:1004.5px;top:215.20px;letter-spacing:-0.6px">0.839</div>
<div class="r" style="left:178.5px;top:213.3px;width:1px;height:15px;background:#e0e0e0;"></div>
<div class="r" style="left:295px;top:213.3px;width:1px;height:15px;background:#e0e0e0;"></div>
<div class="r" style="left:399.7px;top:213.3px;width:1px;height:15px;background:#e0e0e0;"></div>
<div class="r" style="left:529.2px;top:213.3px;width:1px;height:15px;background:#e0e0e0;"></div>
<div class="r" style="left:659.4px;top:213.3px;width:1px;height:15px;background:#e0e0e0;"></div>
<div class="r" style="left:789.7px;top:213.3px;width:1px;height:15px;background:#e0e0e0;"></div>
<div class="r" style="left:919.5px;top:213.3px;width:1px;height:15px;background:#e0e0e0;"></div>
<div class="r" style="left:10.5px;top:228.3px;width:1013.5px;height:15px;background:#ececec;"></div>
<div class="r" style="left:10.5px;top:228.3px;width:1013.5px;height:1px;background:#dcdcdc;"></div>
<svg style="left:13.3px;top:230.3px" width="8" height="11"><rect x="0.6" y="0.6" width="6.8" height="9.8" rx="1.3" fill="#fff" stroke="#d06060" stroke-width="1.1"/><path d="M2.8,3.3 H5.2 M2.8,5.3 H5.2" stroke="#707070" stroke-width="0.9"/></svg>
<div class="t" style="left:26.7px;top:230.20px;font-size:9.5px;color:#282828;font-weight:400;letter-spacing:-0.23px;">eurusd.i</div>
<div class="t" style="left:181.9px;top:230.20px;font-size:9.5px;color:#282828;font-weight:400;letter-spacing:-0.754px;">16779930</div>
<div class="t" style="right:626.75px;top:230.20px;font-size:9.5px;color:#282828;font-weight:400;letter-spacing:-0.648px;">2025.05.29 22:56:48</div>
<div class="t" style="right:496.33px;top:230.20px;font-size:9.5px;color:#282828;font-weight:400;letter-spacing:-0.171px;">sell</div>
<div class="t" style="right:366.65px;top:230.20px;font-size:9.5px;color:#282828;font-weight:400;letter-spacing:-0.653px;">0.01</div>
<div class="t" style="right:236.30px;top:230.20px;font-size:9.5px;color:#282828;font-weight:400;letter-spacing:-0.696px;">1.13674</div>
<div class="t" style="right:119.60px;top:230.20px;font-size:9.5px;color:#282828;font-weight:400;letter-spacing:-0.696px;">1.23674</div>
<svg style="left:910.5px;top:233.20px" width="6" height="6"><path d="M0.5,0.5 L5.5,5.5 M5.5,0.5 L0.5,5.5" stroke="#808080" stroke-width="1.1"/></svg>
<div class="t" style="right:-20.67px;top:230.20px;font-size:9.5px;color:#282828;font-weight:400;letter-spacing:-0.673px;">1.129</div>
<div class="t" style="left:1004.5px;top:230.20px;letter-spacing:-0.6px">1.129</div>
<div class="r" style="left:178.5px;top:228.3px;width:1px;height:15px;background:#e0e0e0;"></div>
<div class="r" style="left:295px;top:228.3px;width:1px;height:15px;background:#e0e0e0;"></div>
<div class="r" style="left:399.7px;top:228.3px;width:1px;height:15px;background:#e0e0e0;"></div>
<div class="r" style="left:529.2px;top:228.3px;width:1px;height:15px;background:#e0e0e0;"></div>
<div class="r" style="left:659.4px;top:228.3px;width:1px;height:15px;background:#e0e0e0;"></div>
<div class="r" style="left:789.7px;top:228.3px;width:1px;height:15px;background:#e0e0e0;"></div>
<div class="r" style="left:919.5px;top:228.3px;width:1px;height:15px;background:#e0e0e0;"></div>
<svg style="left:13.3px;top:245.3px" width="8" height="11"><rect x="0.6" y="0.6" width="6.8" height="9.8" rx="1.3" fill="#fff" stroke="#5a80b0" stroke-width="1.1"/><path d="M2.8,3.3 H5.2 M2.8,5.3 H5.2" stroke="#707070" stroke-width="0.9"/></svg>
<div class="t" style="left:26.7px;top:245.20px;font-size:9.5px;color:#282828;font-weight:400;letter-spacing:-0.24px;">usdcad.i</div>
<div class="t" style="left:181.9px;top:245.20px;font-size:9.5px;color:#282828;font-weight:400;letter-spacing:-0.754px;">16780717</div>
<div class="t" style="right:626.75px;top:245.20px;font-size:9.5px;color:#282828;font-weight:400;letter-spacing:-0.648px;">2025.05.30 00:06:19</div>
<div class="t" style="right:496.25px;top:245.20px;font-size:9.5px;color:#282828;font-weight:400;letter-spacing:-0.245px;">buy</div>
<div class="t" style="right:366.65px;top:245.20px;font-size:9.5px;color:#282828;font-weight:400;letter-spacing:-0.653px;">0.01</div>
<div class="t" style="right:236.30px;top:245.20px;font-size:9.5px;color:#282828;font-weight:400;letter-spacing:-0.696px;">1.38161</div>
<div class="t" style="right:119.60px;top:245.20px;font-size:9.5px;color:#282828;font-weight:400;letter-spacing:-0.696px;">1.28161</div>
<svg style="left:910.5px;top:248.20px" width="6" height="6"><path d="M0.5,0.5 L5.5,5.5 M5.5,0.5 L0.5,5.5" stroke="#808080" stroke-width="1.1"/></svg>
<div class="t" style="right:-20.67px;top:245.20px;font-size:9.5px;color:#282828;font-weight:400;letter-spacing:-0.673px;">1.386</div>
<div class="t" style="left:1004.5px;top:245.20px;letter-spacing:-0.6px">1.386</div>
<div class="r" style="left:178.5px;top:243.3px;width:1px;height:15px;background:#e0e0e0;"></div>
<div class="r" style="left:295px;top:243.3px;width:1px;height:15px;background:#e0e0e0;"></div>
<div class="r" style="left:399.7px;top:243.3px;width:1px;height:15px;background:#e0e0e0;"></div>
<div class="r" style="left:529.2px;top:243.3px;width:1px;height:15px;background:#e0e0e0;"></div>
<div class="r" style="left:659.4px;top:243.3px;width:1px;height:15px;background:#e0e0e0;"></div>
<div class="r" style="left:789.7px;top:243.3px;width:1px;height:15px;background:#e0e0e0;"></div>
<div class="r" style="left:919.5px;top:243.3px;width:1px;height:15px;background:#e0e0e0;"></div>
<div class="r" style="left:10.5px;top:258.2px;width:1013.5px;height:14.5px;background:#c9c9c9;"></div>
<svg style="left:13.5px;top:261px" width="9" height="9"><circle cx="4.5" cy="4.5" r="3.8" fill="none" stroke="#303030" stroke-width="1"/><path d="M2.3,4.5 H6.7 M4.5,2.3 V6.7" stroke="#303030" stroke-width="1"/></svg>
<div class="t" style="left:26.5px;top:259.80px;font-size:9px;color:#282828;font-weight:700;letter-spacing:-0.12px;">Balance: 1 000.30 USD&nbsp;&nbsp;Equity: 1 008.78&nbsp;&nbsp;Margin: 25.26&nbsp;&nbsp;Free Margin: 983.52&nbsp;&nbsp;Margin Level: 3 993.59 %</div>
<svg style="left:13.3px;top:274.7px" width="9" height="12"><path d="M1.9,0.6 H6.6 A1.3,1.3 0 0 1 7.9,1.9 V8 L5.3,10.6 H1.9 A1.3,1.3 0 0 1 0.6,9.3 V1.9 A1.3,1.3 0 0 1 1.9,0.6 Z" fill="#fff" stroke="#5a80b0" stroke-width="1.1"/><path d="M8.4,7.8 L8.4,11 L5.2,11 Z" fill="#5a80b0"/><path d="M3.3,3.3 H5.2 M3.3,5.3 H5.2" stroke="#707070" stroke-width="0.9"/></svg>
<div class="t" style="left:26.7px;top:274.60px;font-size:9.5px;color:#282828;font-weight:400;letter-spacing:-0.243px;">audusd.i</div>
<div class="t" style="left:181.9px;top:274.60px;font-size:9.5px;color:#282828;font-weight:400;letter-spacing:-0.754px;">16807335</div>
<div class="t" style="right:626.75px;top:274.60px;font-size:9.5px;color:#282828;font-weight:400;letter-spacing:-0.648px;">2025.05.30 10:16:00</div>
<div class="t" style="right:496.29px;top:274.60px;font-size:9.5px;color:#282828;font-weight:400;letter-spacing:-0.21px;">buy limit</div>
<div class="t" style="right:366.75px;top:274.60px;font-size:9.5px;color:#282828;font-weight:400;letter-spacing:-0.553px;">0.01 / 0</div>
<div class="t" style="right:236.30px;top:274.60px;font-size:9.5px;color:#282828;font-weight:400;letter-spacing:-0.696px;">0.63641</div>
<div class="t" style="right:119.60px;top:274.60px;font-size:9.5px;color:#282828;font-weight:400;letter-spacing:-0.696px;">0.43641</div>
<svg style="left:910.5px;top:277.60px" width="6" height="6"><path d="M0.5,0.5 L5.5,5.5 M5.5,0.5 L0.5,5.5" stroke="#808080" stroke-width="1.1"/></svg>
<div class="t" style="right:-20.67px;top:274.60px;font-size:9.5px;color:#282828;font-weight:400;letter-spacing:-0.673px;">0.641</div>
<div class="t" style="left:1004.5px;top:274.60px;letter-spacing:-0.6px">0.641</div>
<div class="r" style="left:178.5px;top:272.7px;width:1px;height:15px;background:#e0e0e0;"></div>
<div class="r" style="left:295px;top:272.7px;width:1px;height:15px;background:#e0e0e0;"></div>
<div class="r" style="left:399.7px;top:272.7px;width:1px;height:15px;background:#e0e0e0;"></div>
<div class="r" style="left:529.2px;top:272.7px;width:1px;height:15px;background:#e0e0e0;"></div>
<div class="r" style="left:659.4px;top:272.7px;width:1px;height:15px;background:#e0e0e0;"></div>
<div class="r" style="left:789.7px;top:272.7px;width:1px;height:15px;background:#e0e0e0;"></div>
<div class="r" style="left:919.5px;top:272.7px;width:1px;height:15px;background:#e0e0e0;"></div>
<div class="r" style="left:10.5px;top:287.4px;width:1013.5px;height:15px;background:#ececec;"></div>
<div class="r" style="left:10.5px;top:287.4px;width:1013.5px;height:1px;background:#dcdcdc;"></div>
<svg style="left:13.3px;top:289.4px" width="9" height="12"><path d="M1.9,0.6 H6.6 A1.3,1.3 0 0 1 7.9,1.9 V8 L5.3,10.6 H1.9 A1.3,1.3 0 0 1 0.6,9.3 V1.9 A1.3,1.3 0 0 1 1.9,0.6 Z" fill="#fff" stroke="#d06060" stroke-width="1.1"/><path d="M8.4,7.8 L8.4,11 L5.2,11 Z" fill="#d06060"/><path d="M3.3,3.3 H5.2 M3.3,5.3 H5.2" stroke="#707070" stroke-width="0.9"/></svg>
<div class="t" style="left:26.7px;top:289.30px;font-size:9.5px;color:#282828;font-weight:400;letter-spacing:-0.234px;">eurgbp.i</div>
<div class="t" style="left:181.9px;top:289.30px;font-size:9.5px;color:#282828;font-weight:400;letter-spacing:-0.754px;">16779948</div>
<div class="t" style="right:626.75px;top:289.30px;font-size:9.5px;color:#282828;font-weight:400;letter-spacing:-0.648px;">2025.05.29 22:57:53</div>
<div class="t" style="right:496.32px;top:289.30px;font-size:9.5px;color:#282828;font-weight:400;letter-spacing:-0.184px;">sell limit</div>
<div class="t" style="right:366.75px;top:289.30px;font-size:9.5px;color:#282828;font-weight:400;letter-spacing:-0.553px;">0.02 / 0</div>
<div class="t" style="right:236.30px;top:289.30px;font-size:9.5px;color:#282828;font-weight:400;letter-spacing:-0.696px;">0.84645</div>
<div class="t" style="right:119.60px;top:289.30px;font-size:9.5px;color:#282828;font-weight:400;letter-spacing:-0.696px;">1.04645</div>
<svg style="left:910.5px;top:292.30px" width="6" height="6"><path d="M0.5,0.5 L5.5,5.5 M5.5,0.5 L0.5,5.5" stroke="#808080" stroke-width="1.1"/></svg>
<div class="t" style="right:-20.67px;top:289.30px;font-size:9.5px;color:#282828;font-weight:400;letter-spacing:-0.673px;">0.842</div>
<div class="t" style="left:1004.5px;top:289.30px;letter-spacing:-0.6px">0.842</div>
<div class="r" style="left:178.5px;top:287.4px;width:1px;height:15px;background:#e0e0e0;"></div>
<div class="r" style="left:295px;top:287.4px;width:1px;height:15px;background:#e0e0e0;"></div>
<div class="r" style="left:399.7px;top:287.4px;width:1px;height:15px;background:#e0e0e0;"></div>
<div class="r" style="left:529.2px;top:287.4px;width:1px;height:15px;background:#e0e0e0;"></div>
<div class="r" style="left:659.4px;top:287.4px;width:1px;height:15px;background:#e0e0e0;"></div>
<div class="r" style="left:789.7px;top:287.4px;width:1px;height:15px;background:#e0e0e0;"></div>
<div class="r" style="left:919.5px;top:287.4px;width:1px;height:15px;background:#e0e0e0;"></div>
<svg style="left:13.3px;top:304.09999999999997px" width="9" height="12"><path d="M1.9,0.6 H6.6 A1.3,1.3 0 0 1 7.9,1.9 V8 L5.3,10.6 H1.9 A1.3,1.3 0 0 1 0.6,9.3 V1.9 A1.3,1.3 0 0 1 1.9,0.6 Z" fill="#fff" stroke="#d06060" stroke-width="1.1"/><path d="M8.4,7.8 L8.4,11 L5.2,11 Z" fill="#d06060"/><path d="M3.3,3.3 H5.2 M3.3,5.3 H5.2" stroke="#707070" stroke-width="0.9"/></svg>
<div class="t" style="left:26.7px;top:304.00px;font-size:9.5px;color:#282828;font-weight:400;letter-spacing:-0.23px;">eurusd.i</div>
<div class="t" style="left:181.9px;top:304.00px;font-size:9.5px;color:#282828;font-weight:400;letter-spacing:-0.754px;">16779931</div>
<div class="t" style="right:626.75px;top:304.00px;font-size:9.5px;color:#282828;font-weight:400;letter-spacing:-0.648px;">2025.05.29 22:56:48</div>
<div class="t" style="right:496.32px;top:304.00px;font-size:9.5px;color:#282828;font-weight:400;letter-spacing:-0.184px;">sell limit</div>
<div class="t" style="right:366.75px;top:304.00px;font-size:9.5px;color:#282828;font-weight:400;letter-spacing:-0.553px;">0.01 / 0</div>
<div class="t" style="right:236.30px;top:304.00px;font-size:9.5px;color:#282828;font-weight:400;letter-spacing:-0.696px;">1.14131</div>
<div class="t" style="right:119.60px;top:304.00px;font-size:9.5px;color:#282828;font-weight:400;letter-spacing:-0.696px;">1.34131</div>
<svg style="left:910.5px;top:307.00px" width="6" height="6"><path d="M0.5,0.5 L5.5,5.5 M5.5,0.5 L0.5,5.5" stroke="#808080" stroke-width="1.1"/></svg>
<div class="t" style="right:-20.67px;top:304.00px;font-size:9.5px;color:#282828;font-weight:400;letter-spacing:-0.673px;">1.134</div>
<div class="t" style="left:1004.5px;top:304.00px;letter-spacing:-0.6px">1.134</div>
<div class="r" style="left:178.5px;top:302.09999999999997px;width:1px;height:15px;background:#e0e0e0;"></div>
<div class="r" style="left:295px;top:302.09999999999997px;width:1px;height:15px;background:#e0e0e0;"></div>
<div class="r" style="left:399.7px;top:302.09999999999997px;width:1px;height:15px;background:#e0e0e0;"></div>
<div class="r" style="left:529.2px;top:302.09999999999997px;width:1px;height:15px;background:#e0e0e0;"></div>
<div class="r" style="left:659.4px;top:302.09999999999997px;width:1px;height:15px;background:#e0e0e0;"></div>
<div class="r" style="left:789.7px;top:302.09999999999997px;width:1px;height:15px;background:#e0e0e0;"></div>
<div class="r" style="left:919.5px;top:302.09999999999997px;width:1px;height:15px;background:#e0e0e0;"></div>
<div class="r" style="left:10px;top:314px;width:1014px;height:22px;background:#f0f0f0;"></div>
<div class="r" style="left:48.5px;top:314.2px;width:975.5px;height:1.3px;background:#505050;"></div>
<div class="r" style="left:12.3px;top:314.2px;width:36.5px;height:14.5px;background:#fff;border:1px solid #404040;border-top:none;box-sizing:border-box"></div>
<div class="t" style="left:20.5px;top:316.00px;font-size:9.5px;color:#282828;font-weight:400;letter-spacing:-0.33px;">Trade</div>
<div class="t" style="left:56.3px;top:316.00px;font-size:9.5px;color:#747474;font-weight:400;letter-spacing:-0.303px;">Exposure</div>
<div class="r" style="left:99.6px;top:317.5px;width:1px;height:9px;background:#a0a0a0;"></div>
<div class="t" style="left:107px;top:316.00px;font-size:9.5px;color:#747474;font-weight:400;letter-spacing:-0.28px;">History</div>
<div class="r" style="left:143px;top:317.5px;width:1px;height:9px;background:#a0a0a0;"></div>
<div class="t" style="left:150.3px;top:316.00px;font-size:9.5px;color:#747474;font-weight:400;letter-spacing:-0.42px;">News</div>
<div class="r" style="left:179.3px;top:317.5px;width:1px;height:9px;background:#a0a0a0;"></div>
<div class="t" style="left:187px;top:316.00px;font-size:9.5px;color:#747474;font-weight:400;letter-spacing:-0.313px;">Mailbox</div>
<div class="r" style="left:235.3px;top:317.5px;width:1px;height:9px;background:#a0a0a0;"></div>
<div class="t" style="left:243.2px;top:316.00px;font-size:9.5px;color:#747474;font-weight:400;letter-spacing:-0.299px;">Calendar</div>
<div class="r" style="left:285.8px;top:317.5px;width:1px;height:9px;background:#a0a0a0;"></div>
<div class="t" style="left:293.2px;top:316.00px;font-size:9.5px;color:#747474;font-weight:400;letter-spacing:-0.356px;">Company</div>
<div class="r" style="left:339.5px;top:317.5px;width:1px;height:9px;background:#a0a0a0;"></div>
<div class="t" style="left:346.8px;top:316.00px;font-size:9.5px;color:#747474;font-weight:400;letter-spacing:-0.277px;">Alerts</div>
<div class="r" style="left:376.7px;top:317.5px;width:1px;height:9px;background:#a0a0a0;"></div>
<div class="t" style="left:384px;top:316.00px;font-size:9.5px;color:#747474;font-weight:400;letter-spacing:-0.249px;">Articles</div>
<div class="r" style="left:420.6px;top:317.5px;width:1px;height:9px;background:#a0a0a0;"></div>
<div class="t" style="left:428px;top:316.00px;font-size:9.5px;color:#747474;font-weight:400;letter-spacing:-0.391px;">Code Base</div>
<div class="r" style="left:476.9px;top:317.5px;width:1px;height:9px;background:#a0a0a0;"></div>
<div class="t" style="left:484.2px;top:316.00px;font-size:9.5px;color:#747474;font-weight:400;letter-spacing:-0.292px;">Experts</div>
<div class="r" style="left:520.3px;top:317.5px;width:1px;height:9px;background:#a0a0a0;"></div>
<div class="t" style="left:527px;top:316.00px;font-size:9.5px;color:#747474;font-weight:400;letter-spacing:-0.267px;">Journal</div>
<div class="t" style="left:220.3px;top:317.80px;font-size:7.39px;color:#c82020;font-weight:700;letter-spacing:-0.587px;">11</div>
<div class="r" style="left:0px;top:333.3px;width:1024px;height:1.2px;background:#c8c8c8;"></div>
<div class="r" style="left:0px;top:334.5px;width:1024px;height:2.5px;background:#f6f6f6;"></div>
<div class="r" style="left:0px;top:336.9px;width:1024px;height:1px;background:#c8c8c8;"></div>
<svg style="left:1.7px;top:339.2px" width="5" height="4"><path d="M0.3,0.3 L4.3,3.7 M4.3,0.3 L0.3,3.7" stroke="#202020" stroke-width="1.2"/></svg>
<div class="r" style="left:0px;top:349px;width:9px;height:227px;background:#b7cfe6;"></div>
<div class="t" style="left:-23px;top:536.5px;width:55px;transform:rotate(-90deg);font-size:9px;color:#3a4a5a;text-align:center">Strategy Tester</div>
<div class="r" style="left:10px;top:337.5px;width:1014px;height:215.5px;background:#ffffff;"></div>
<div class="r" style="left:10px;top:337.5px;width:1px;height:215.5px;background:#c0c0c0;"></div>
<div class="t" style="left:13.3px;top:339.80px;font-size:9.5px;color:#282828;font-weight:400;letter-spacing:-0.287px;">History Quality</div>
<div class="t" style="right:563.12px;top:339.80px;font-size:9.5px;color:#282828;font-weight:400;letter-spacing:-0.877px;">62%</div>
<div class="r" style="left:10.5px;top:351.9px;width:1013.5px;height:14.2px;background:#ececec;"></div>
<div class="t" style="left:13.3px;top:354.00px;font-size:9.5px;color:#282828;font-weight:400;letter-spacing:-0.359px;">Bars</div>
<div class="t" style="right:563.25px;top:354.00px;font-size:9.5px;color:#282828;font-weight:400;letter-spacing:-0.754px;">47948</div>
<div class="t" style="left:487.9px;top:354.00px;font-size:9.5px;color:#282828;font-weight:400;letter-spacing:-0.304px;">Ticks</div>
<div class="t" style="right:88.45px;top:354.00px;font-size:9.5px;color:#282828;font-weight:400;letter-spacing:-0.754px;">131503253</div>
<div class="t" style="left:962.9px;top:354.00px;font-size:9.5px;color:#282828;font-weight:400;letter-spacing:-0.321px;">Symbols</div>
<div class="t" style="left:13.3px;top:368.20px;font-size:9.5px;color:#282828;font-weight:400;letter-spacing:-0.247px;">Initial Deposit</div>
<div class="t" style="right:563.34px;top:368.20px;font-size:9.5px;color:#282828;font-weight:400;letter-spacing:-0.664px;">10 000.00</div>
<div class="r" style="left:10.5px;top:380.3px;width:1013.5px;height:14.2px;background:#ececec;"></div>
<div class="t" style="left:13.3px;top:382.40px;font-size:9.5px;color:#282828;font-weight:400;letter-spacing:-0.312px;">Total Net Profit</div>
<div class="t" style="right:563.34px;top:382.40px;font-size:9.5px;color:#282828;font-weight:400;letter-spacing:-0.664px;">61 163.12</div>
<div class="t" style="left:487.9px;top:382.40px;font-size:9.5px;color:#282828;font-weight:400;letter-spacing:-0.313px;">Balance Drawdown Absolute</div>
<div class="t" style="right:88.51px;top:382.40px;font-size:9.5px;color:#282828;font-weight:400;letter-spacing:-0.687px;">635.47</div>
<div class="t" style="left:962.9px;top:382.40px;font-size:9.5px;color:#282828;font-weight:400;letter-spacing:-0.31px;">Equity Drawdown Absolute</div>
<div class="t" style="left:13.3px;top:396.60px;font-size:9.5px;color:#282828;font-weight:400;letter-spacing:-0.309px;">Gross Profit</div>
<div class="t" style="right:563.33px;top:396.60px;font-size:9.5px;color:#282828;font-weight:400;letter-spacing:-0.673px;">141 658.28</div>
<div class="t" style="left:487.9px;top:396.60px;font-size:9.5px;color:#282828;font-weight:400;letter-spacing:-0.328px;">Balance Drawdown Maximal</div>
<div class="t" style="right:88.55px;top:396.60px;font-size:9.5px;color:#282828;font-weight:400;letter-spacing:-0.648px;">14 739.70 (28.61%)</div>
<div class="t" style="left:962.9px;top:396.60px;font-size:9.5px;color:#282828;font-weight:400;letter-spacing:-0.325px;">Equity Drawdown Maximal</div>
<div class="r" style="left:10.5px;top:408.7px;width:1013.5px;height:14.2px;background:#ececec;"></div>
<div class="t" style="left:13.3px;top:410.80px;font-size:9.5px;color:#282828;font-weight:400;letter-spacing:-0.353px;">Gross Loss</div>
<div class="t" style="right:563.36px;top:410.80px;font-size:9.5px;color:#282828;font-weight:400;letter-spacing:-0.64px;">-80 495.16</div>
<div class="t" style="left:487.9px;top:410.80px;font-size:9.5px;color:#282828;font-weight:400;letter-spacing:-0.309px;">Balance Drawdown Relative</div>
<div class="t" style="right:88.55px;top:410.80px;font-size:9.5px;color:#282828;font-weight:400;letter-spacing:-0.648px;">28.61% (14 739.70)</div>
<div class="t" style="left:962.9px;top:410.80px;font-size:9.5px;color:#282828;font-weight:400;letter-spacing:-0.306px;">Equity Drawdown Relative</div>
<div class="r" style="left:10.5px;top:437.1px;width:1013.5px;height:14.2px;background:#ececec;"></div>
<div class="t" style="left:13.3px;top:439.20px;font-size:9.5px;color:#282828;font-weight:400;letter-spacing:-0.282px;">Profit Factor</div>
<div class="t" style="right:563.35px;top:439.20px;font-size:9.5px;color:#282828;font-weight:400;letter-spacing:-0.653px;">1.76</div>
<div class="t" style="left:487.9px;top:439.20px;font-size:9.5px;color:#282828;font-weight:400;letter-spacing:-0.303px;">Expected Payoff</div>
<div class="t" style="right:88.53px;top:439.20px;font-size:9.5px;color:#282828;font-weight:400;letter-spacing:-0.673px;">44.42</div>
<div class="t" style="left:962.9px;top:439.20px;font-size:9.5px;color:#282828;font-weight:400;letter-spacing:-0.323px;">Margin Level</div>
<div class="t" style="left:13.3px;top:453.40px;font-size:9.5px;color:#282828;font-weight:400;letter-spacing:-0.304px;">Recovery Factor</div>
<div class="t" style="right:563.35px;top:453.40px;font-size:9.5px;color:#282828;font-weight:400;letter-spacing:-0.653px;">3.17</div>
<div class="t" style="left:487.9px;top:453.40px;font-size:9.5px;color:#282828;font-weight:400;letter-spacing:-0.327px;">Sharpe Ratio</div>
<div class="t" style="right:88.55px;top:453.40px;font-size:9.5px;color:#282828;font-weight:400;letter-spacing:-0.653px;">1.06</div>
<div class="t" style="left:962.9px;top:453.40px;font-size:9.5px;color:#282828;font-weight:400;letter-spacing:-0.407px;">Z-Score</div>
<div class="r" style="left:10.5px;top:465.5px;width:1013.5px;height:14.2px;background:#ececec;"></div>
<div class="t" style="left:13.3px;top:467.60px;font-size:9.5px;color:#282828;font-weight:400;letter-spacing:-0.838px;">AHPR</div>
<div class="t" style="right:563.35px;top:467.60px;font-size:9.5px;color:#282828;font-weight:400;letter-spacing:-0.646px;">1.0015 (0.15%)</div>
<div class="t" style="left:487.9px;top:467.60px;font-size:9.5px;color:#282828;font-weight:400;letter-spacing:-0.333px;">LR Correlation</div>
<div class="t" style="right:88.55px;top:467.60px;font-size:9.5px;color:#282828;font-weight:400;letter-spacing:-0.653px;">0.98</div>
<div class="t" style="left:962.9px;top:467.60px;font-size:9.5px;color:#282828;font-weight:400;letter-spacing:-0.294px;">OnTester result</div>
<div class="t" style="left:13.3px;top:481.80px;font-size:9.5px;color:#282828;font-weight:400;letter-spacing:-0.871px;">GHPR</div>
<div class="t" style="right:563.35px;top:481.80px;font-size:9.5px;color:#282828;font-weight:400;letter-spacing:-0.646px;">1.0014 (0.14%)</div>
<div class="t" style="left:487.9px;top:481.80px;font-size:9.5px;color:#282828;font-weight:400;letter-spacing:-0.359px;">LR Standard Error</div>
<div class="t" style="right:88.55px;top:481.80px;font-size:9.5px;color:#282828;font-weight:400;letter-spacing:-0.653px;">3 308.65</div>
<div class="r" style="left:10.5px;top:493.9px;width:1013.5px;height:14.2px;background:#ececec;"></div>
<div class="t" style="left:13.3px;top:510.20px;font-size:9.5px;color:#282828;font-weight:400;letter-spacing:-0.308px;">Total Trades</div>
<div class="t" style="right:563.25px;top:510.20px;font-size:9.5px;color:#282828;font-weight:400;letter-spacing:-0.754px;">1377</div>
<div class="t" style="left:487.9px;top:510.20px;font-size:9.5px;color:#282828;font-weight:400;letter-spacing:-0.366px;">Short Trades (won %)</div>
<div class="t" style="right:88.54px;top:510.20px;font-size:9.5px;color:#282828;font-weight:400;letter-spacing:-0.662px;">699 (60.37%)</div>
<div class="t" style="left:962.9px;top:510.20px;font-size:9.5px;color:#282828;font-weight:400;letter-spacing:-0.377px;">Long Trades (won %)</div>
<div class="r" style="left:10.5px;top:522.3px;width:1013.5px;height:14.2px;background:#ececec;"></div>
<div class="t" style="left:13.3px;top:524.40px;font-size:9.5px;color:#282828;font-weight:400;letter-spacing:-0.321px;">Total Deals</div>
<div class="t" style="right:563.25px;top:524.40px;font-size:9.5px;color:#282828;font-weight:400;letter-spacing:-0.754px;">2754</div>
<div class="t" style="left:487.9px;top:524.40px;font-size:9.5px;color:#282828;font-weight:400;letter-spacing:-0.31px;">Profit Trades (% of total)</div>
<div class="t" style="right:88.54px;top:524.40px;font-size:9.5px;color:#282828;font-weight:400;letter-spacing:-0.662px;">921 (66.88%)</div>
<div class="t" style="left:962.9px;top:524.40px;font-size:9.5px;color:#282828;font-weight:400;letter-spacing:-0.328px;">Loss Trades (% of total)</div>
<div class="t" style="right:563.72px;top:538.60px;font-size:9.5px;color:#282828;font-weight:400;letter-spacing:-0.277px;">Largest</div>
<div class="t" style="left:487.9px;top:538.60px;font-size:9.5px;color:#282828;font-weight:400;letter-spacing:-0.2px;">profit trade</div>
<div class="t" style="right:88.55px;top:538.60px;font-size:9.5px;color:#282828;font-weight:400;letter-spacing:-0.653px;">7 323.61</div>
<div class="t" style="left:962.9px;top:538.60px;font-size:9.5px;color:#282828;font-weight:400;letter-spacing:-0.22px;">loss trade</div>
<div class="r" style="left:487px;top:340px;width:323.3px;height:10.6px;background:#fb3c3c;box-shadow:inset 0 0 0 1px #b82626"></div>
<div class="r" style="left:810.3px;top:340px;width:8.5px;height:10.6px;background:#c4a46a;box-shadow:inset 0 0 0 1px #7e6c44"></div>
<div class="r" style="left:818.8px;top:340px;width:205.2px;height:10.6px;background:#9af67e;box-shadow:inset 0 0 0 1px #5aa050"></div>
<svg style="left:433px;top:390.6px" width="10" height="15"><path d="M0.5,0.5 L0.5,12.6 L3.3,9.9 L5.4,14.2 L7.1,13.4 L5.1,9.2 L8.9,9.2 Z" fill="rgba(255,255,255,0.8)" stroke="#1a1a1a" stroke-width="0.85"/></svg>
<svg style="left:8px;top:379px" width="458" height="19"><rect x="2.05" y="2.05" width="453.1" height="14.2" rx="2.2" fill="none" stroke="#1fb83a" stroke-width="2.5"/></svg>
<svg style="left:402px;top:384px" width="22" height="10"><path d="M1,3.3 L13,3.3 L13,0.8 L20.5,4.7 L13,8.6 L13,6.1 L1,6.1 Z" fill="#22b43a"/></svg>
<div class="r" style="left:10px;top:551px;width:1014px;height:25px;background:#f0f0f0;"></div>
<div class="r" style="left:10px;top:551px;width:1014px;height:2.6px;background:#e6e6e6;"></div>
<div class="r" style="left:10px;top:553.6px;width:140px;height:1.2px;background:#555555;"></div>
<div class="r" style="left:197px;top:553.6px;width:827px;height:1.2px;background:#555555;"></div>
<div class="r" style="left:150px;top:553.8px;width:47px;height:14.8px;background:#fff;border:1px solid #404040;border-top:none;box-sizing:border-box"></div>
<div class="t" style="left:19.9px;top:555.70px;font-size:9.5px;color:#747474;font-weight:400;letter-spacing:-0.31px;">Overview</div>
<div class="r" style="left:63.9px;top:557px;width:1px;height:9px;background:#a0a0a0;"></div>
<div class="t" style="left:71.2px;top:555.70px;font-size:9.5px;color:#747474;font-weight:400;letter-spacing:-0.268px;">Settings</div>
<div class="r" style="left:110.5px;top:557px;width:1px;height:9px;background:#a0a0a0;"></div>
<div class="t" style="left:117.2px;top:555.70px;font-size:9.5px;color:#747474;font-weight:400;letter-spacing:-0.241px;">Inputs</div>
<div class="t" style="left:157.3px;top:555.70px;font-size:9.5px;color:#2a2a2a;font-weight:700;letter-spacing:-0.85px;">Backtest</div>
<div class="t" style="left:205px;top:555.70px;font-size:9.5px;color:#747474;font-weight:400;letter-spacing:-0.37px;">Graph</div>
<div class="r" style="left:236.4px;top:557px;width:1px;height:9px;background:#a0a0a0;"></div>
<div class="t" style="left:244px;top:555.70px;font-size:9.5px;color:#747474;font-weight:400;letter-spacing:-0.276px;">Optimization Results</div>
<div class="r" style="left:332.6px;top:557px;width:1px;height:9px;background:#a0a0a0;"></div>
<div class="t" style="left:339.9px;top:555.70px;font-size:9.5px;color:#747474;font-weight:400;letter-spacing:-0.32px;">Agents</div>
<div class="r" style="left:375.6px;top:557px;width:1px;height:9px;background:#a0a0a0;"></div>
<div class="t" style="left:382.4px;top:555.70px;font-size:9.5px;color:#747474;font-weight:400;letter-spacing:-0.267px;">Journal</div>
<div class="r" style="left:0px;top:572.5px;width:1024px;height:1px;background:#d0d0d0;"></div>
</body></html>
